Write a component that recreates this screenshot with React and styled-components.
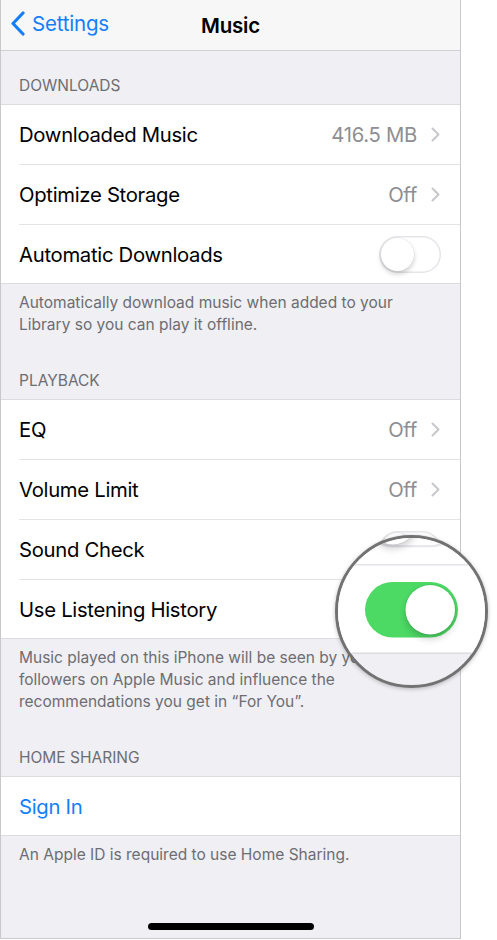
import styled, { createGlobalStyle } from "styled-components";

const GlobalStyle = createGlobalStyle`
  body {
    margin: 0;
    background: #ffffff;
    font-family: "Inter", "Roboto", "Liberation Sans", sans-serif;
    -webkit-font-smoothing: antialiased;
  }
`;

function Chevron() {
  return (
    <svg width="9" height="15" viewBox="0 0 9 15">
      <path d="M1.5 1.5 L7.5 7.5 L1.5 13.5" fill="none" stroke="#c7c7cc" strokeWidth="2" strokeLinecap="round" strokeLinejoin="round" />
    </svg>
  );
}

function BackChevron() {
  return (
    <svg width="16" height="25" viewBox="0 0 16 25">
      <path d="M13 2 L3 12.5 L13 23" fill="none" stroke="#157efb" strokeWidth="3.2" strokeLinecap="round" strokeLinejoin="round" />
    </svg>
  );
}

function Toggle({ on }) {
  return (
    <Switch $on={on}>
      <Knob $on={on} />
    </Switch>
  );
}

function Cell({ label, value, toggle, on, link }) {
  return (
    <Row>
      <RowInner>
        <Label $link={link}>{label}</Label>
        {value && (
          <Accessory>
            <Value>{value}</Value>
            <Chevron />
          </Accessory>
        )}
        {toggle && <Toggle on={on} />}
      </RowInner>
    </Row>
  );
}

// loupe over the listening history switch, rows drawn again at 1.5x
function Loupe() {
  return (
    <Lens>
      <LensContent>
        <Group>
          <LensRow>
            <Toggle />
          </LensRow>
          <LensRow $last>
            <Toggle on />
          </LensRow>
        </Group>
      </LensContent>
    </Lens>
  );
}

export default function App() {
  return (
    <>
      <GlobalStyle />
      <Screen>
        <NavBar>
          <Back>
            <BackChevron />
            <span>Settings</span>
          </Back>
          <Title>Music</Title>
        </NavBar>

        <SectionHeader>Downloads</SectionHeader>
        <Group>
          <Cell label="Downloaded Music" value="416.5 MB" />
          <Cell label="Optimize Storage" value="Off" />
          <Cell label="Automatic Downloads" toggle />
        </Group>
        <Footer>
          Automatically download music when added to your
          <br />
          Library so you can play it offline.
        </Footer>

        <SectionHeader>Playback</SectionHeader>
        <Group>
          <Cell label="EQ" value="Off" />
          <Cell label="Volume Limit" value="Off" />
          <Cell label="Sound Check" toggle />
          <Cell label="Use Listening History" toggle on />
        </Group>
        <Footer>
          Music played on this iPhone will be seen by your
          <br />
          followers on Apple Music and influence the
          <br />
          recommendations you get in “For You”.
        </Footer>

        <SectionHeader>Home Sharing</SectionHeader>
        <Group>
          <Cell label="Sign In" link />
        </Group>
        <Footer>An Apple ID is required to use Home Sharing.</Footer>

        <HomeIndicator />

        <Loupe />
      </Screen>
    </>
  );
}

const Screen = styled.div`
  position: relative;
  box-sizing: border-box;
  width: 461px;
  height: 939px;
  display: flex;
  flex-direction: column;
  background: #efeff4;
  border-left: 1px solid #c9c9cc;
  border-right: 1px solid #c9c9cc;
  border-bottom: 1px solid #c9c9cc;
`;

const NavBar = styled.header`
  box-sizing: border-box;
  height: 51px;
  flex-shrink: 0;
  display: flex;
  align-items: center;
  justify-content: center;
  position: relative;
  background: #f7f7f7;
  border-bottom: 1px solid #d0d0d4;
`;

const Back = styled.div`
  position: absolute;
  left: 9px;
  top: 11px;
  display: flex;
  align-items: center;
  gap: 6px;
  color: #157efb;
  font-size: 20.5px;
  letter-spacing: -0.2px;

  span {
    margin-top: -1px;
  }
`;

const Title = styled.h1`
  margin: 0;
  font-size: 20.5px;
  font-weight: 600;
  letter-spacing: -0.2px;
  color: #000;
`;

const SectionHeader = styled.div`
  padding: 26px 18px 9px;
  font-size: 15.5px;
  line-height: 18px;
  text-transform: uppercase;
  color: #6d6d72;
`;

const Group = styled.div`
  background: #ffffff;
  border-top: 1px solid #dcdce0;
  border-bottom: 1px solid #dcdce0;
`;

const Row = styled.div`
  padding-left: 18px;
`;

const RowInner = styled.div`
  box-sizing: border-box;
  height: 60px;
  display: flex;
  align-items: center;
  justify-content: space-between;
  padding-right: 19px;
  border-bottom: 1px solid #e3e3e8;

  ${Row}:last-child & {
    height: 58px;
    border-bottom: none;
  }
`;

const Label = styled.span`
  font-size: 20.3px;
  letter-spacing: -0.3px;
  color: ${(p) => (p.$link ? "#157efb" : "#000000")};
`;

const Accessory = styled.div`
  display: flex;
  align-items: center;
  gap: 14px;
  margin-right: 1px;
`;

const Value = styled.span`
  font-size: 20.3px;
  letter-spacing: -0.3px;
  color: #8e8e93;
`;

const Switch = styled.span`
  position: relative;
  box-sizing: border-box;
  width: 62px;
  height: 37px;
  border-radius: 19px;
  background: ${(p) => (p.$on ? "#4cd964" : "#ffffff")};
  box-shadow: ${(p) => (p.$on ? "none" : "inset 0 0 0 1.5px #e5e5ea")};
`;

const Knob = styled.span`
  position: absolute;
  top: 2px;
  left: ${(p) => (p.$on ? "27px" : "2px")};
  width: 33px;
  height: 33px;
  border-radius: 50%;
  background: #ffffff;
  box-shadow: 0 3px 5px rgba(0, 0, 0, 0.18), 0 0 0 0.5px rgba(0, 0, 0, 0.08);
`;

const Footer = styled.div`
  padding: 8px 18px 10px;
  font-size: 15.5px;
  line-height: 22px;
  color: #6d6d72;
  white-space: nowrap;
`;

const HomeIndicator = styled.div`
  width: 166px;
  height: 7px;
  border-radius: 4px;
  background: #000;
  margin: auto auto 8px 147px;
`;

const Lens = styled.div`
  position: absolute;
  left: 334px;
  top: 535px;
  box-sizing: border-box;
  width: 153px;
  height: 153px;
  border-radius: 50%;
  border: 3px solid #727272;
  background: #efeff4;
  overflow: hidden;
  box-shadow: 0 1px 4px rgba(0, 0, 0, 0.25);
`;

const LensContent = styled.div`
  position: absolute;
  left: -540px;
  top: -64px;
  width: 459px;
  transform: scale(1.5);
  transform-origin: 0 0;
`;

const LensRow = styled.div`
  box-sizing: border-box;
  height: ${(p) => (p.$last ? "58px" : "60px")};
  margin-left: 18px;
  padding-right: 19px;
  display: flex;
  align-items: center;
  justify-content: flex-end;
  border-bottom: ${(p) => (p.$last ? "none" : "1px solid #e3e3e8")};
`;
